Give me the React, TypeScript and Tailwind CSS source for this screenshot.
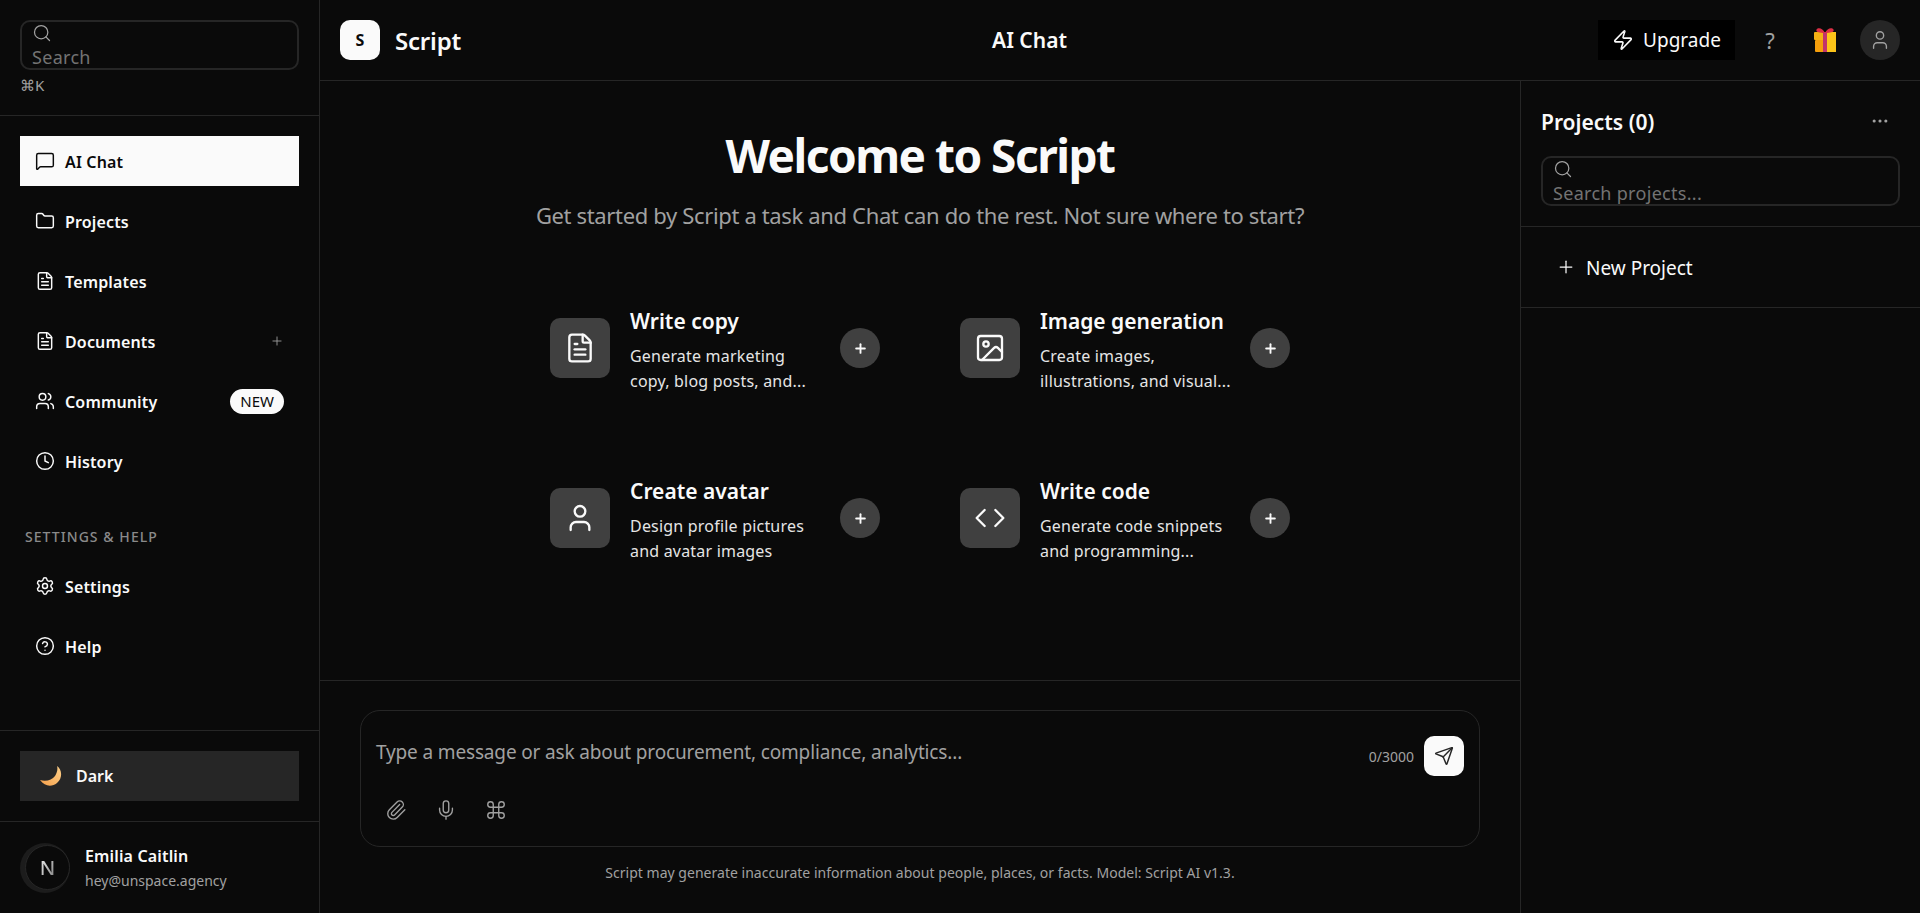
import React from 'react';
import {
  MessageSquare,
  Folder,
  FileText,
  Users,
  Clock,
  Settings,
  CircleHelp,
  Plus,
  Search,
  Zap,
  User,
  Ellipsis,
  Image,
  Code,
  Paperclip,
  Mic,
  Command,
  Send,
} from 'lucide-react';

const FONT = "font-['Noto_Sans',sans-serif]";

const mainNav = [
  { label: 'AI Chat', icon: MessageSquare, active: true },
  { label: 'Projects', icon: Folder },
  { label: 'Templates', icon: FileText },
  { label: 'Documents', icon: FileText, plus: true },
  { label: 'Community', icon: Users, badge: 'NEW' },
  { label: 'History', icon: Clock },
];

const helpNav = [
  { label: 'Settings', icon: Settings },
  { label: 'Help', icon: CircleHelp },
];

const cards = [
  { title: 'Write copy', icon: FileText, line1: 'Generate marketing', line2: 'copy, blog posts, and...' },
  { title: 'Image generation', icon: Image, line1: 'Create images,', line2: 'illustrations, and visual...' },
  { title: 'Create avatar', icon: User, line1: 'Design profile pictures', line2: 'and avatar images' },
  { title: 'Write code', icon: Code, line1: 'Generate code snippets', line2: 'and programming...' },
];

type NavEntry = {
  label: string;
  icon: React.ElementType;
  active?: boolean;
  plus?: boolean;
  badge?: string;
};

const NavItem = ({ item }: { item: NavEntry }) => {
  const Icon = item.icon;
  return (
    <div
      className={`h-[50px] flex items-center gap-[10px] px-[15px] text-[16px] font-semibold tracking-[0.15px] ${
        item.active ? 'bg-[#fafafa] text-[#0a0a0a]' : 'text-[#fafafa]'
      }`}
    >
      <Icon size={20} strokeWidth={1.75} />
      <span className="flex-1 pt-[1px]">{item.label}</span>
      {item.plus && <Plus size={14} strokeWidth={1.5} className="text-[#a1a1a1]" />}
      {item.badge && (
        <span className="h-[25px] px-[10px] rounded-full bg-[#fafafa] text-[#0a0a0a] text-[15px] leading-[25px] font-normal tracking-normal">
          {item.badge}
        </span>
      )}
    </div>
  );
};

const Sidebar = () => (
  <aside className="w-[320px] shrink-0 h-full flex flex-col border-r border-[#262626]">
    <div className="h-[116px] shrink-0 border-b border-[#262626] px-5 pt-5">
      <div className="h-[50px] w-[279px] border-2 border-[#262626] rounded-[10px] px-[10px] overflow-hidden">
        <Search size={20} strokeWidth={1.5} className="text-[#a1a1a1] mt-[1px]" />
        <div className="text-[18px] leading-[25px] mt-[2px] tracking-[0.3px] text-[#737373]">Search</div>
      </div>
      <div className="text-[15px] leading-[20px] mt-[5px] text-[#a1a1a1]">⌘K</div>
    </div>

    <nav className="flex-1 px-5 pt-5">
      <div className="w-[279px] flex flex-col gap-[10px]">
        {mainNav.map((item) => (
          <NavItem key={item.label} item={item} />
        ))}
      </div>
      <div className="mt-[41px] mb-[14px] px-[5px] text-[14px] leading-[20px] font-medium tracking-[1.05px] text-[#8a8a8a]">
        SETTINGS &amp; HELP
      </div>
      <div className="w-[279px] flex flex-col gap-[10px]">
        {helpNav.map((item) => (
          <NavItem key={item.label} item={item} />
        ))}
      </div>
    </nav>

    <div className="h-[91px] shrink-0 border-t border-[#262626] px-5 pt-5">
      <div className="h-[50px] w-[279px] bg-[#262626] flex items-center pl-[20px] gap-[14px] text-[16px] font-semibold text-[#fafafa]">
        <svg width="22" height="21" viewBox="0 0 22 21">
          <defs>
            <linearGradient id="moonFill" x1="0" y1="1" x2="1" y2="0">
              <stop offset="0" stopColor="#f59f4a" />
              <stop offset="1" stopColor="#fcd08a" />
            </linearGradient>
          </defs>
          <path d="M17 0C22 3 23 12 17 17 12 21 5 21 0 14 6 16 12 14 15 10 17 7 18 3 17 0Z" fill="url(#moonFill)" />
        </svg>
        Dark
      </div>
    </div>

    <div className="h-[92px] shrink-0 border-t border-[#262626] px-5 flex items-center gap-[15px]">
      <div className="w-[50px] h-[50px] rounded-full bg-[#1c1c1c] flex items-center justify-end">
        <div className="w-[45px] h-[45px] rounded-full bg-[#0a0a0a] border border-[#262626] flex items-center justify-center text-[20px] font-medium">
          <span className="bg-linear-to-br from-white to-[#777] bg-clip-text text-transparent">N</span>
        </div>
      </div>
      <div>
        <div className="text-[16px] leading-[24px] font-semibold text-[#fafafa] tracking-[0.15px]">Emilia Caitlin</div>
        <div className="text-[14px] leading-[20px] mt-[3px] text-[#a1a1a1]">hey@unspace.agency</div>
      </div>
    </div>
  </aside>
);

const TopBar = () => (
  <header className="h-[81px] shrink-0 border-b border-[#262626] px-5 flex items-center justify-between">
    <div className="flex items-center gap-[15px]">
      <div className="w-10 h-10 rounded-[10px] bg-[#fafafa] text-[#0a0a0a] font-bold text-[16px] flex items-center justify-center">
        S
      </div>
      <span className="text-[24px] font-semibold text-[#fafafa] tracking-[-0.2px] pt-[2px]">Script</span>
    </div>
    <div className="text-[21px] font-semibold text-[#fafafa] pt-[2px]">AI Chat</div>
    <div className="flex items-center">
      <div className="h-10 w-[137px] bg-black flex items-center justify-center gap-[9px] text-[19px] text-[#fafafa]">
        <Zap size={22} strokeWidth={1.75} />
        <span className="pt-[1px]">Upgrade</span>
      </div>
      <div className="w-[70px] mr-[9px] text-center text-[22px] text-[#a1a1a1]">?</div>
      <svg width="22" height="24" viewBox="0 0 22 24">
        <rect x="0" y="4" width="22" height="8" rx="1" fill="#f5b014" />
        <rect x="1" y="12" width="20" height="12" rx="1" fill="#f59e0b" />
        <rect x="13" y="4" width="9" height="20" fill="#fcc419" />
        <rect x="9" y="4" width="4" height="20" fill="#c2336b" />
        <path d="M11 5C9 0 4 -1 2.500 1.500 1.500 4 5 5 11 5ZM11 5C13 0 18 -1 19.500 1.500 20.500 4 17 5 11 5Z" fill="#dc2f45" />
      </svg>
      <div className="ml-[24px] w-10 h-10 rounded-full bg-[#262626] flex items-center justify-center text-[#a1a1a1]">
        <User size={22} strokeWidth={1.5} />
      </div>
    </div>
  </header>
);

const Welcome = () => (
  <section className="flex-1 flex flex-col items-center pt-[44px]">
    <h1 className="text-[46px] leading-[60px] font-bold text-[#fafafa] tracking-[-1.5px]">Welcome to Script</h1>
    <p className="mt-[15px] text-[22px] leading-[30px] text-[#a1a1a1] tracking-[-0.35px]">
      Get started by Script a task and Chat can do the rest. Not sure where to start?
    </p>
    <div className="mt-[53px] grid grid-cols-2 gap-x-[40px] gap-y-[40px]">
      {cards.map((card) => {
        const Icon = card.icon;
        return (
          <div key={card.title} className="w-[370px] h-[130px] px-5 flex items-center gap-5">
            <div className="w-[60px] h-[60px] shrink-0 rounded-[10px] bg-[#404040] flex items-center justify-center text-[#fafafa]">
              <Icon size={32} strokeWidth={1.75} />
            </div>
            <div className="w-[190px] shrink-0 mt-[4px]">
              <div className="text-[21px] leading-[28px] font-semibold text-[#fafafa] whitespace-nowrap">
                {card.title}
              </div>
              <div className="mt-[9px] text-[16px] leading-[25px] text-[#e5e5e5] tracking-[0.2px] whitespace-nowrap">
                {card.line1}
                <br />
                {card.line2}
              </div>
            </div>
            <div className="w-10 h-10 shrink-0 rounded-full bg-[#404040] flex items-center justify-center text-[#fafafa]">
              <Plus size={15} strokeWidth={3} />
            </div>
          </div>
        );
      })}
    </div>
  </section>
);

const Composer = () => (
  <section className="h-[233px] shrink-0 border-t border-[#262626] px-10 pt-[29px]">
    <div className="h-[137px] border border-[#262626] rounded-[20px] pl-[15px] pr-[15px] pt-[25px]">
      <div className="flex items-start justify-between">
        <span className="text-[19px] leading-[30px] text-[#a1a1a1] tracking-[-0.15px] mt-[1px]">
          Type a message or ask about procurement, compliance, analytics...
        </span>
        <div className="flex items-center gap-[10px]">
          <span className="text-[14px] text-[#a1a1a1]">0/3000</span>
          <div className="w-10 h-10 rounded-[10px] bg-[#fafafa] flex items-center justify-center text-[#262626]">
            <Send size={20} strokeWidth={1.75} />
          </div>
        </div>
      </div>
      <div className="flex items-center gap-[28px] mt-[23px] pl-[9px] text-[#a1a1a1]">
        <Paperclip size={22} strokeWidth={1.5} />
        <Mic size={22} strokeWidth={1.5} />
        <Command size={22} strokeWidth={1.5} />
      </div>
    </div>
    <p className="mt-[16px] text-center text-[14px] leading-[20px] text-[#a1a1a1] tracking-[0.02px]">
      Script may generate inaccurate information about people, places, or facts. Model: Script AI v1.3.
    </p>
  </section>
);

const ProjectsPanel = () => (
  <aside className="w-[400px] shrink-0 h-full border-l border-[#262626]">
    <div className="h-[146px] border-b border-[#262626] px-5 pt-[25px]">
      <div className="h-[30px] flex items-center justify-between">
        <span className="text-[21px] font-semibold text-[#fafafa] pt-[3px]">Projects (0)</span>
        <Ellipsis size={20} strokeWidth={1.75} className="text-[#a1a1a1] mr-[10px]" />
      </div>
      <div className="mt-[20px] h-[50px] border-2 border-[#262626] rounded-[10px] px-[10px] overflow-hidden">
        <Search size={20} strokeWidth={1.5} className="text-[#a1a1a1] mt-[1px]" />
        <div className="text-[18px] leading-[25px] mt-[2px] tracking-[0.3px] text-[#737373]">Search projects...</div>
      </div>
    </div>
    <div className="h-[81px] border-b border-[#262626] px-[35px] flex items-center gap-[10px] text-[19px] text-[#fafafa]">
      <Plus size={20} strokeWidth={1.5} />
      <span className="pt-[2px]">New Project</span>
    </div>
  </aside>
);

export default function App() {
  return (
    <div className={`h-screen w-full flex overflow-hidden bg-[#0a0a0a] ${FONT}`}>
      <Sidebar />
      <div className="flex-1 min-w-0 h-full flex flex-col">
        <TopBar />
        <div className="flex-1 min-h-0 flex">
          <main className="flex-1 min-w-0 h-full flex flex-col">
            <Welcome />
            <Composer />
          </main>
          <ProjectsPanel />
        </div>
      </div>
    </div>
  );
}
